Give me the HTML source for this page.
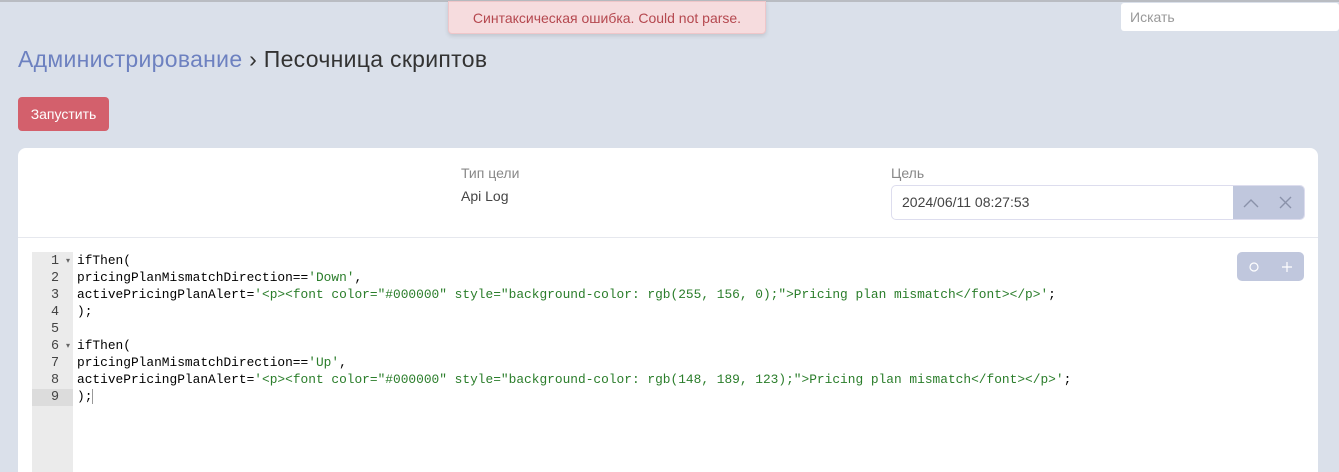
<!DOCTYPE html>
<html><head><meta charset="utf-8"><style>
*{box-sizing:border-box;margin:0;padding:0}
html,body{width:1339px;height:472px;overflow:hidden}
body{background:#dae0ea;font-family:"Liberation Sans",sans-serif;position:relative}
.topline{position:absolute;left:0;top:0;width:1339px;height:2px;background:#b9bcc2}
.toast{position:absolute;left:448px;top:1px;width:318px;height:33px;background:#f6dcde;border:1px solid #efc6c9;border-radius:0 0 4px 4px;color:#b5484f;font-size:14px;text-align:center;line-height:33px;box-shadow:0 2px 4px rgba(0,0,0,.12)}
.search{position:absolute;left:1121px;top:3px;width:218px;height:28px;background:#fff;border-radius:3px;color:#999;font-size:14px;padding:6px 9px}
h1{position:absolute;left:18px;top:46px;font-size:23px;letter-spacing:0.3px;font-weight:normal;color:#333}
h1 span{color:#6d81c0}
.btn{position:absolute;left:18px;top:97px;width:91px;height:34px;background:#d3606c;border-radius:4px;color:#fff;font-size:14px;line-height:34px;text-align:center}
.card{position:absolute;left:18px;top:148px;width:1300px;height:330px;background:#fff;border-radius:8px 8px 0 0}
.lbl{position:absolute;color:#888;font-size:14px}
.val{position:absolute;color:#444;font-size:14px}
.inp{position:absolute;left:873px;top:37px;width:414px;height:35px;border:1px solid #dde;border-radius:5px;font-size:14px;color:#444;padding:8px 10px;overflow:hidden}
.inp .b{position:absolute;right:0;top:0;width:71px;height:35px;background:#c0c7dd}
.hr{position:absolute;left:0;top:89px;width:1300px;height:1px;background:#e6e8ee}
.gut{position:absolute;left:14px;top:104px;width:41px;height:240px;background:#ebebeb}
.code{position:absolute;left:14px;top:104px;font-family:"Liberation Mono",monospace;font-size:12.85px;line-height:17px}
.ln{display:block;white-space:pre;height:17px}
.n{display:inline-block;width:41px;text-align:right;padding-right:14px;color:#444;position:relative;font-size:13.4px}
.n.f:after{content:"▾";position:absolute;right:3px;top:0;font-size:8px;color:#666}
.cur{background:#dcdcdc}
.t{padding-left:4px;color:#000}
.s{color:#2a7d2a}
.tb{position:absolute;left:1219px;top:104px;width:67px;height:29px;background:#c0c7dd;border-radius:5px}
</style></head><body>
<div class="topline"></div>
<div class="toast">Синтаксическая ошибка. Could not parse.</div>
<div class="search">Искать</div>
<h1><span>Администрирование</span> › Песочница скриптов</h1>
<div class="btn">Запустить</div>
<div class="card">
<div class="lbl" style="left:443px;top:17px">Тип цели</div>
<div class="val" style="left:443px;top:40px">Api Log</div>
<div class="lbl" style="left:873px;top:17px">Цель</div>
<div class="inp">2024/06/11 08:27:53<div class="b"><svg width="71" height="35" viewBox="0 0 71 35"><path d="M11 21 L18 14 L25 21" fill="none" stroke="#8a92aa" stroke-width="1.4"/><path d="M47 11 L58 22 M58 11 L47 22" fill="none" stroke="#8a92aa" stroke-width="1.4"/></svg></div></div>
<div class="hr"></div>
<div class="gut"></div>
<div class="code">
<span class="ln"><span class="n f">1</span><span class="t">ifThen(</span></span>
<span class="ln"><span class="n">2</span><span class="t">pricingPlanMismatchDirection==<span class="s">'Down'</span>,</span></span>
<span class="ln"><span class="n">3</span><span class="t">activePricingPlanAlert=<span class="s">'&lt;p&gt;&lt;font color="#000000" style="background-color: rgb(255, 156, 0);"&gt;Pricing plan mismatch&lt;/font&gt;&lt;/p&gt;'</span>;</span></span>
<span class="ln"><span class="n">4</span><span class="t">);</span></span>
<span class="ln"><span class="n">5</span><span class="t"></span></span>
<span class="ln"><span class="n f">6</span><span class="t">ifThen(</span></span>
<span class="ln"><span class="n">7</span><span class="t">pricingPlanMismatchDirection==<span class="s">'Up'</span>,</span></span>
<span class="ln"><span class="n">8</span><span class="t">activePricingPlanAlert=<span class="s">'&lt;p&gt;&lt;font color="#000000" style="background-color: rgb(148, 189, 123);"&gt;Pricing plan mismatch&lt;/font&gt;&lt;/p&gt;'</span>;</span></span>
<span class="ln"><span class="n cur">9</span><span class="t">);<span style="border-left:1px solid #999"></span></span></span>
</div>
<div class="tb"><svg width="67" height="29" viewBox="0 0 67 29"><circle cx="17" cy="15" r="4" fill="none" stroke="#fff" stroke-width="1.2"/><path d="M50 10 V20 M45 15 H55" stroke="#fff" stroke-width="1.2"/></svg></div>
</div>
</body></html>
